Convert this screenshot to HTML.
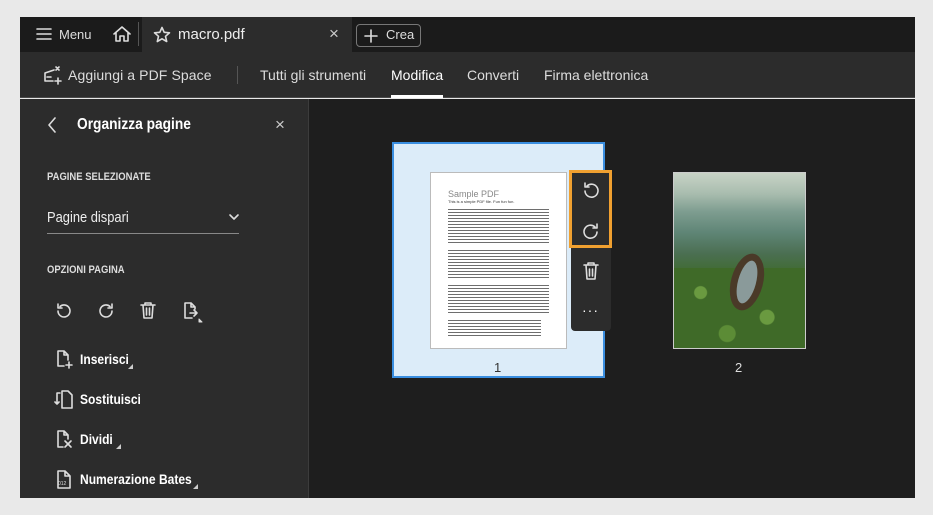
<!DOCTYPE html>
<html><head><meta charset="utf-8"><style>
*{margin:0;padding:0;box-sizing:border-box}
body{width:933px;height:515px;background:#e9e9e9;font-family:"Liberation Sans",sans-serif;position:relative;overflow:hidden;color:#fff}
.a{position:absolute}
.cond{transform:scaleX(0.86);transform-origin:left top;white-space:nowrap}
svg{position:absolute;fill:none;stroke:#ddd;stroke-width:1.6;stroke-linecap:round;stroke-linejoin:round}
.tx{background:repeating-linear-gradient(#555 0 1.2px,transparent 1.2px 3px);opacity:.85}
</style></head><body>
<div class="a" style="left:20px;top:17px;width:895px;height:35px;background:#1b1b1b"></div>
<div class="a" style="left:142px;top:17px;width:210px;height:35px;background:#2c2c2c"></div>
<svg style="left:36px;top:27px" width="16" height="14"><path d="M1 2H15M1 7H15M1 12H15"/></svg>
<div class="a" style="left:59px;top:27px;font-size:13px;color:#ddd">Menu</div>
<svg style="left:112px;top:25px" width="20" height="18" stroke-width="1.8"><path d="M2 9L10 2L18 9M4 8V16H8V11H12V16H16V8"/></svg>
<div class="a" style="left:138px;top:22px;width:1px;height:24px;background:#555"></div>
<svg style="left:153px;top:26px" width="18" height="17"><path d="M9 1.5L11.2 6.3L16.5 6.8L12.5 10.3L13.7 15.5L9 12.8L4.3 15.5L5.5 10.3L1.5 6.8L6.8 6.3Z"/></svg>
<div class="a" style="left:178px;top:26px;font-size:15px;color:#eee">macro.pdf</div>
<div class="a" style="left:329px;top:24px;font-size:17px;color:#ccc">×</div>
<div class="a" style="left:356px;top:24px;width:65px;height:23px;border:1px solid #777;border-radius:4px"></div>
<svg style="left:364px;top:29px" width="14" height="14"><path d="M7 1V13M1 7H13"/></svg>
<div class="a" style="left:386px;top:27px;font-size:13px;color:#ddd">Crea</div>

<div class="a" style="left:20px;top:52px;width:895px;height:46px;background:#2c2c2c;border-bottom:1px solid #4a4a4a"></div>
<svg style="left:42px;top:65px" width="22" height="20"><path d="M3 8L12 5M3 8V16H11M5 12H9M14 2L17 5M17 2L14 5M16 13V19M13 16H19"/></svg>
<div class="a" style="left:68px;top:67px;font-size:14px;color:#ddd;letter-spacing:0.1px">Aggiungi a PDF Space</div>
<div class="a" style="left:237px;top:66px;width:1px;height:18px;background:#555"></div>
<div class="a" style="left:260px;top:67px;font-size:14px;color:#ddd">Tutti gli strumenti</div>
<div class="a" style="left:391px;top:67px;font-size:14px;color:#fff">Modifica</div>
<div class="a" style="left:391px;top:95px;width:52px;height:3px;background:#fff"></div>
<div class="a" style="left:467px;top:67px;font-size:14px;color:#ddd">Converti</div>
<div class="a" style="left:544px;top:67px;font-size:14px;color:#ddd">Firma elettronica</div>

<div class="a" style="left:20px;top:99px;width:288px;height:399px;background:#2c2c2c"></div>
<div class="a" style="left:308px;top:99px;width:607px;height:399px;background:#1e1e1e;border-left:1px solid #3c3c3c"></div>

<svg style="left:46px;top:116px" width="12" height="18" stroke-width="2.4"><path d="M9 2L3 9L9 16"/></svg>
<div class="a cond" style="left:77px;top:116px;font-size:16px;font-weight:bold">Organizza pagine</div>
<div class="a" style="left:275px;top:115px;font-size:17px;color:#ccc">×</div>
<div class="a cond" style="left:47px;top:171px;font-size:11px;font-weight:bold;color:#ddd">PAGINE SELEZIONATE</div>
<div class="a cond" style="left:47px;top:209px;font-size:15px;color:#eee">Pagine dispari</div>
<svg style="left:228px;top:213px" width="12" height="9" stroke-width="2"><path d="M2 2L6 6L10 2"/></svg>
<div class="a" style="left:47px;top:233px;width:192px;height:1px;background:#888"></div>
<div class="a cond" style="left:47px;top:264px;font-size:11px;font-weight:bold;color:#ddd">OPZIONI PAGINA</div>
<svg style="left:55px;top:302px" width="18" height="18"><path d="M3 9A6 6 0 1 0 5 4.5M3 2V6H7"/></svg>
<svg style="left:97px;top:302px" width="18" height="18"><path d="M15 9A6 6 0 1 1 13 4.5M15 2V6H11"/></svg>
<svg style="left:139px;top:301px" width="18" height="19"><path d="M2 4H16M6 4V2H12V4M4 4L5 17H13L14 4M7.5 7V14M10.5 7V14"/></svg>
<svg style="left:181px;top:301px" width="22" height="22"><path d="M11 17H4V2H10L14 6V8M10 2V6H14M9 12H16M13 9L16 12L13 15"/><path d="M18 18L21 21H18Z" fill="#ddd" stroke-width="1"/></svg>
<svg style="left:55px;top:349px" width="22" height="22"><path d="M9 17H3V2H9L13 6V11M9 2V6H13M14 13V19M11 16H17"/></svg>
<div class="a cond" style="left:80px;top:351px;font-size:14px;font-weight:bold">Inserisci</div>
<div class="a" style="left:128px;top:364px;border-left:5px solid transparent;border-bottom:5px solid #ccc"></div>
<svg style="left:54px;top:389px" width="22" height="22"><path d="M6 4H3V15M10 2H14L18 6V19H8V2Z M3 15L5 13M3 15L1 13"/></svg>
<div class="a cond" style="left:80px;top:391px;font-size:14px;font-weight:bold">Sostituisci</div>
<svg style="left:55px;top:429px" width="22" height="22"><path d="M8 18H3V2H9L13 6V10M9 2V6H13M10 12L16 18M16 12L10 18"/></svg>
<div class="a cond" style="left:80px;top:431px;font-size:14px;font-weight:bold">Dividi</div>
<div class="a" style="left:116px;top:444px;border-left:5px solid transparent;border-bottom:5px solid #ccc"></div>
<svg style="left:55px;top:469px" width="18" height="22"><path d="M3 19V2H10L15 7V19Z M10 2V7H15"/></svg>
<div class="a" style="left:58px;top:481px;font-size:5px;color:#ddd">012</div>
<div class="a cond" style="left:80px;top:471px;font-size:14px;font-weight:bold">Numerazione Bates</div>
<div class="a" style="left:193px;top:484px;border-left:5px solid transparent;border-bottom:5px solid #ccc"></div>

<div class="a" style="left:392px;top:142px;width:213px;height:236px;background:#dcecf9;border:2px solid #3a8ee0"></div>
<div class="a" style="left:430px;top:172px;width:137px;height:177px;background:#fff;border:1px solid #bbb;padding:16px 17px">
<div style="font-size:9px;color:#888">Sample PDF</div>
<div style="font-size:4px;color:#333;margin-bottom:5px">This is a simple PDF file. Fun fun fun.</div>
<div class="tx" style="height:36px"></div>
<div style="height:5px"></div>
<div class="tx" style="height:30px"></div>
<div style="height:5px"></div>
<div class="tx" style="height:30px"></div>
<div style="height:5px"></div>
<div class="tx" style="height:18px;width:92%"></div>
</div>
<div class="a" style="left:494px;top:360px;font-size:13px;color:#333">1</div>
<div class="a" style="left:571px;top:170px;width:40px;height:161px;background:#2c2c2c;border-radius:0 0 4px 4px"></div>
<div class="a" style="left:569px;top:170px;width:43px;height:78px;border:3px solid #f0a030;background:#2c2c2c"></div>
<svg style="left:581px;top:181px" width="20" height="20" stroke="#fff" stroke-width="2"><path d="M4 10A6.5 6.5 0 1 0 6 5M4 2V6H8"/></svg>
<svg style="left:581px;top:222px" width="20" height="20" stroke="#fff" stroke-width="2"><path d="M16 10A6.5 6.5 0 1 1 14 5M16 2V6H12"/></svg>
<svg style="left:582px;top:261px" width="18" height="20" stroke="#fff" stroke-width="1.8"><path d="M2 4H16M6 4V2H12V4M4 4L5 18H13L14 4M7.5 8V15M10.5 8V15"/></svg>
<div class="a" style="left:582px;top:302px;font-size:14px;color:#fff;letter-spacing:1px">···</div>

<div class="a" style="left:673px;top:172px;width:133px;height:177px;border:1px solid #ccc;overflow:hidden;background:linear-gradient(180deg,#c8d3c6 0%,#a8bcae 12%,#7e9d90 22%,#5f8576 34%,#4b6f52 46%,#3f6b2e 58%,#4f7d30 76%,#3c6426 100%)">
<div class="a" style="left:0;top:95px;width:133px;height:82px;background:radial-gradient(circle at 20% 30%,#6a9a40 0 6px,transparent 7px),radial-gradient(circle at 70% 60%,#6a9a40 0 7px,transparent 8px),radial-gradient(circle at 40% 80%,#5c8c36 0 8px,transparent 9px),#3f6a28"></div>
</div>
<div class="a" style="left:731px;top:253px;width:32px;height:58px;border:7px solid #4a3a28;border-radius:50%;background:#8a9a9a;transform:rotate(15deg)"></div>
<div class="a" style="left:735px;top:360px;font-size:13px;color:#ddd">2</div>
</body></html>
